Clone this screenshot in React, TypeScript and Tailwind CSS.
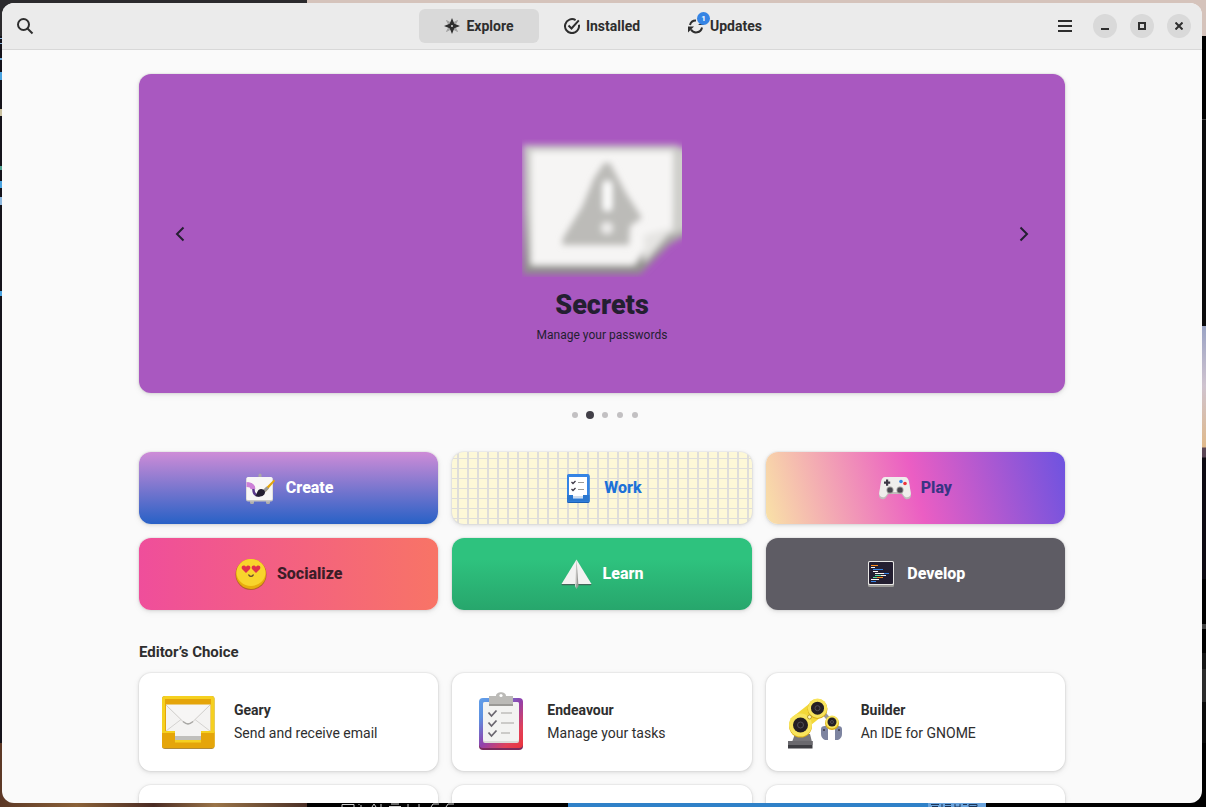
import { useState } from "react";
import type { ReactNode } from "react";

const cardShadow = "shadow-[0_0_0_1px_rgba(0,0,0,0.03),0_1px_3px_1px_rgba(0,0,0,0.07),0_2px_6px_2px_rgba(0,0,0,0.03)]";

function SearchIcon() {
  return (
    <svg width="18" height="18" viewBox="0 0 18 18" fill="none" stroke="#2e2e2e" strokeWidth="2" aria-hidden="true">
      <circle cx="7.5" cy="7.5" r="5.5" />
      <path d="M11.5 11.5 16.5 16.5" />
    </svg>
  );
}

function ExploreIcon() {
  return (
    <svg width="16" height="16" viewBox="0 0 16 16" aria-hidden="true">
      <path d="M2.5 2.5 7 5 5 7zM13.500 2.500 11 7 9 5zM2.500 13.500 5 9 7 11zM13.500 13.500 9 11 11 9z" fill="#a3a3a3" stroke="#a3a3a3" strokeWidth="1" />
      <path d="M8 0 10.300 5.700 16 8 10.300 10.300 8 16 5.700 10.300 0 8 5.700 5.700zM8 7a1 1 0 1 0 0 2 1 1 0 0 0 0-2z" fill="#2e2e2e" fillRule="evenodd" />
    </svg>
  );
}

function InstalledIcon() {
  return (
    <svg width="16" height="16" viewBox="0 0 16 16" fill="none" stroke="#2e2e2e" strokeWidth="2" aria-hidden="true">
      <path d="M11.600 2.100A7 7 0 1 0 14.900 6.800" />
      <path d="M4.500 7.500 7.500 10.500 14.800 2.300" />
    </svg>
  );
}

function UpdatesIcon() {
  return (
    <svg width="16" height="16" viewBox="0 0 16 16" fill="none" stroke="#2e2e2e" strokeWidth="2" aria-hidden="true">
      <path d="M2 7A6 6 0 0 1 8 2.500" />
      <path d="M14 9.500A6 6 0 0 1 3 11.500" />
      <path d="M0 8.500H6L0 14.500z" fill="#2e2e2e" stroke="none" />
      <path d="M10 7H16V2.500z" fill="#2e2e2e" stroke="none" />
    </svg>
  );
}

function MissingImage() {
  return (
    <svg className="h-[138px] w-[160px]" viewBox="0 0 160 138" aria-hidden="true">
      <defs>
        <filter id="soft" x="-10%" y="-10%" width="120%" height="120%">
          <feGaussianBlur stdDeviation="3" />
        </filter>
        <linearGradient id="sheet" x1="0" y1="0" x2="0" y2="1">
          <stop offset="0" stopColor="#c9c9c6" />
          <stop offset="0.5" stopColor="#bdbdb9" />
          <stop offset="1" stopColor="#8f8e8b" />
        </linearGradient>
      </defs>
      <g filter="url(#soft)">
        <path d="M1 6H154L170 13V93L148 105L118 135H1z" fill="url(#sheet)" />
        <path d="M9 12H151V93L130 101L112 126H9z" fill="#f6f5f4" />
        <path d="M152 14H168V88L152 95z" fill="#cfcfcb" />
        <path d="M122 96 152 88 122 124z" fill="#e6e5e3" />
      </g>
      <g filter="url(#soft)">
        <path d="M82 24H88L104 54L120 79L108 87L107 106H40L41 99L60 68L72 39z" fill="#bcbbb8" />
        <rect x="81" y="42" width="9" height="30" rx="4" fill="#fff" />
        <circle cx="85" cy="89" r="6" fill="#efeeed" />
      </g>
    </svg>
  );
}

function CreateIcon() {
  return (
    <svg width="32" height="32" viewBox="0 0 32 32" aria-hidden="true">
      <path d="M14.500 6V3a1.500 1.500 0 0 1 3 0v3z" fill="#a9a8a5" />
      <rect x="6" y="28" width="4" height="4" rx="1.500" fill="#b0afac" />
      <rect x="22" y="28" width="4" height="4" rx="1.500" fill="#b0afac" />
      <rect x="2" y="5.500" width="27" height="24" rx="2" fill="#c9c7c4" />
      <rect x="2.500" y="5" width="26" height="23" rx="1.500" fill="#f8f7f6" />
      <path d="M4 12C8 12 9.500 14 9.500 18c0 4 2 5.500 6 5.500" fill="none" stroke="#5b3a8c" strokeWidth="2.500" />
      <path d="M2.500 12.500c4 0 6 1 6.500 4.500" fill="none" stroke="#cd80d8" strokeWidth="5" />
      <path d="M19.500 18 30 7.500 31 9 21.500 20z" fill="#e5a50a" />
      <path d="M18.500 18.500 22.500 14.500 25 16.500 21 20.500z" fill="#9a9996" />
      <path d="M11 24c2-1 1.500-4 3.500-6 2.500-2 6-.5 6.500 2 .3 3.500-4.500 6-10 4z" fill="#241f31" />
    </svg>
  );
}

function WorkIcon() {
  return (
    <svg width="32" height="32" viewBox="0 0 32 32" aria-hidden="true">
      <rect x="5" y="3" width="22.500" height="28" rx="1.500" fill="#1a5fb4" />
      <rect x="5" y="2" width="22.500" height="28" rx="1.500" fill="#3584e4" />
      <path d="M7 5h18v18H7z" fill="#fff" />
      <path d="M5 23h6v4h10v-4h6.500v6.500H5z" fill="#2b77cf" />
      <path d="M11 23h10v3.500H11z" fill="#cfdcec" />
      <path d="M11 22h10v2H11z" fill="#fff" />
      <path d="m9.500 10 1.500 1.500L13.500 9M9.500 17l1.500 1.500 2.500-2.500" fill="none" stroke="#3d3846" strokeWidth="1.300" />
      <path d="M16 10.500h6M16 17.500h6" stroke="#9a9996" />
    </svg>
  );
}

function PlayIcon() {
  return (
    <svg width="32" height="32" viewBox="0 0 32 32" aria-hidden="true">
      <path d="M6.500 6h19c3 0 4 2 4.500 5l2 12c.5 4-5 6-7 2.500L22.500 22h-13L7 25.500C5 29-.5 27 0 23l2-12c.5-3 1.500-5 4.500-5z" fill="#c0bfbc" />
      <path d="M6.500 5h19c3 0 4 2 4.500 5l1.800 11c.5 4-5 6-7 2.500L22.500 20h-13L7.200 23.500c-2 3.500-7.500 1.500-7-2.500L2 10c.5-3 1.500-5 4.500-5z" fill="#efeeec" />
      <path d="M7 7.500h2.200v2h2v2.200h-2v2H7v-2H5V9.500h2z" fill="#3d3846" />
      <circle cx="22" cy="9.500" r="1.800" fill="#3584e4" />
      <circle cx="26" cy="11.500" r="1.800" fill="#ed333b" />
      <circle cx="11" cy="18" r="3.500" fill="#9a9996" />
      <circle cx="21" cy="18" r="3.500" fill="#9a9996" />
      <circle cx="11" cy="18" r="2.600" fill="#4a4750" />
      <circle cx="21" cy="18" r="2.600" fill="#4a4750" />
    </svg>
  );
}

function SocializeIcon() {
  return (
    <svg width="32" height="32" viewBox="0 0 32 32" aria-hidden="true">
      <circle cx="16" cy="16.500" r="15.500" fill="#b5622c" />
      <circle cx="16" cy="16" r="15" fill="#e8ad0c" />
      <ellipse cx="16" cy="14.500" rx="14.500" ry="13.500" fill="#f8d52c" />
      <path d="M11 15 7 11C5.500 8 9 6 11 8.800c2-2.800 5.500-.8 4 2.200zM21 15l-4-4C15.500 8 19 6 21 8.800c2-2.800 5.500-.8 4 2.200z" fill="#e0304a" />
      <path d="M13.500 16.500c.8 2.500 4.200 2.500 5 0" fill="none" stroke="#63452c" strokeWidth="1.200" />
    </svg>
  );
}

function LearnIcon() {
  return (
    <svg width="32" height="32" viewBox="0 0 32 32" aria-hidden="true">
      <path d="M.5 26 1 27.200H14V25zM30.500 26 30 27.200H17V25z" fill="#44675a" />
      <path d="M15.500 1.500 30.500 26H.5z" fill="#f3f2f1" />
      <path d="M15.500 1.500 14 28l1.500 3z" fill="#d6d4d1" />
      <path d="M15.500 1.500 17.500 28l-2 3z" fill="#9a9996" />
    </svg>
  );
}

function DevelopIcon() {
  return (
    <svg width="32" height="32" viewBox="0 0 32 32" aria-hidden="true">
      <rect x="3" y="4" width="26" height="25" rx="1.500" fill="#9a9996" />
      <rect x="3" y="3" width="26" height="24" rx="1.500" fill="#e8e7e5" />
      <rect x="4" y="4" width="24" height="22" rx="1" fill="#241f31" />
      <path d="M6 7.500h7M12 19.500h6" stroke="#ff8c1a" />
      <path d="M6 9.500h4M8 13.500h5M10 15.500h9M16 17.500h5M6 21.500h8" stroke="#f6f5f4" />
      <path d="M8 11.500h10M19 15.500h5M6 23.500h5" stroke="#3584e4" />
      <path d="M10 17.500h6M8 19.500h4" stroke="#57e3a0" />
    </svg>
  );
}

function GearyIcon() {
  return (
    <svg width="64" height="64" viewBox="0 0 64 64" aria-hidden="true">
      <rect x="6" y="6" width="52.500" height="53" rx="3" fill="#b08a3a" />
      <rect x="6" y="6" width="52.500" height="52" rx="3" fill="#f5d020" />
      <rect x="9" y="9" width="46" height="34" fill="#e5a50a" />
      <path d="M10 14.500h44.500V42H10z" fill="#f4f3f2" />
      <path d="m10 41 15-11.500M54 41 39 29.500" stroke="#d5d3d1" fill="none" />
      <path d="M10 15 27 31.500c4 3 6 3 10 0L54 15" fill="#f7f6f5" stroke="#d0cecb" />
      <path d="M27 31.500c4 3.200 6 3.200 10 0" fill="none" stroke="#a9a8a5" strokeWidth="1.500" />
      <path d="M6 42h13v10h26V42h13.500v14a2 2 0 0 1-2 2H8a2 2 0 0 1-2-2z" fill="#e5a50a" />
      <path d="M6 41h13v2H6zM45 41h13.500v2H45z" fill="#f5d020" />
      <path d="M19 42h26v5H19z" fill="#f4f3f2" />
      <path d="M19 46h26v4H19z" fill="#c0bfbc" />
      <path d="M19 50h26v2.500H19z" fill="#f5d020" />
    </svg>
  );
}

function EndeavourIcon() {
  return (
    <svg width="64" height="64" viewBox="0 0 64 64" aria-hidden="true">
      <defs>
        <linearGradient id="board" x1="0" y1="0" x2="1" y2="1">
          <stop offset="0" stopColor="#62a0ea" />
          <stop offset="0.220" stopColor="#5c8fe0" />
          <stop offset="0.500" stopColor="#9141ac" />
          <stop offset="0.780" stopColor="#e0405a" />
          <stop offset="1" stopColor="#ed333b" />
        </linearGradient>
      </defs>
      <rect x="10" y="10" width="44" height="50" rx="4" fill="#7a2a5c" />
      <rect x="10" y="8" width="44" height="50" rx="4" fill="url(#board)" />
      <rect x="14" y="12" width="36" height="41" rx="2" fill="#dcdad7" />
      <rect x="14" y="12" width="36" height="39" rx="2" fill="#f3f3f2" />
      <path d="M20 6h7c0-5 10-5 10 0h7v9H20z" fill="#bbbab7" />
      <path d="M20 14h24v2H20z" fill="#9a9996" />
      <circle cx="32" cy="5.500" r="1.600" fill="#fff" />
      <path d="m19.500 22.500 3 3.500 5-5.500M19.500 32.500l3 3.500 5-5.500M19.500 42.500l3 3.500 5-5.500" fill="none" stroke="#6b6770" strokeWidth="1.800" />
      <path d="M32 23h11M32 33h13M32 43h9" stroke="#c0bfbc" strokeWidth="1.500" />
    </svg>
  );
}

function BuilderIcon() {
  return (
    <svg width="64" height="64" viewBox="0 0 64 64" aria-hidden="true">
      <path d="M12 44h15l2 8H9z" fill="#77767b" />
      <rect x="5" y="51" width="24.500" height="7.500" fill="#3d3d42" />
      <rect x="5" y="51" width="24.500" height="4" fill="#6a696e" />
      <path d="m38 20 11 13" stroke="#9a9996" strokeWidth="4" />
      <path d="M38 39q0-3 4-3h2l1 3v11h-3q-4-2-4-6zM59 39q0-3-4-3h-2l-1 3v11h3q4-2 4-6z" fill="#7d84a0" />
      <path d="M43 38h10v-4H43z" fill="#8d93aa" />
      <circle cx="41" cy="40" r="1" fill="#3d3846" />
      <circle cx="56" cy="40" r="1" fill="#3d3846" />
      <path d="M7 29 26 14l12 13-10 8z" fill="#f3d838" />
      <circle cx="17.500" cy="36" r="11.500" fill="#d9ac16" />
      <circle cx="17.500" cy="35" r="11.500" fill="#f8e45c" />
      <circle cx="34.500" cy="19" r="10" fill="#d9ac16" />
      <circle cx="34.500" cy="18.200" r="9.700" fill="#f8e45c" />
      <circle cx="49" cy="33" r="7" fill="#d9ac16" />
      <circle cx="49" cy="32" r="6.500" fill="#f8e45c" />
      <circle cx="26.500" cy="27" r="2" fill="#fff7c0" stroke="#b89c2a" />
      <circle cx="17.500" cy="35" r="7.500" fill="#241f24" />
      <circle cx="34.500" cy="18.200" r="6.500" fill="#241f24" />
      <circle cx="49" cy="32" r="4.500" fill="#241f24" />
      <g fill="none" stroke="#504d55">
        <circle cx="17.500" cy="35" r="3" />
        <circle cx="34.500" cy="18.200" r="2.500" />
        <circle cx="49" cy="32" r="1.500" />
      </g>
    </svg>
  );
}

const tabs: { label: string; icon: ReactNode; badge?: number }[] = [
  { label: "Explore", icon: <ExploreIcon /> },
  { label: "Installed", icon: <InstalledIcon /> },
  { label: "Updates", icon: <UpdatesIcon />, badge: 1 },
];

const categories = [
  { label: "Create", icon: <CreateIcon />, style: "text-white bg-[linear-gradient(180deg,#ce8cd7_0%,#2861c6_100%)]" },
  {
    label: "Work",
    icon: <WorkIcon />,
    style:
      "text-[#1c71d8] bg-[#fdf8d7] bg-[linear-gradient(#deddda_1px,transparent_1px),linear-gradient(90deg,#deddda_2px,transparent_2px)] bg-[size:10px_10px] bg-[position:5px_6px]",
  },
  { label: "Play", icon: <PlayIcon />, style: "text-[#393484] bg-[linear-gradient(75deg,#f9e2a7_0%,#eb5ec3_50%,#6d53e0_100%)]" },
  { label: "Socialize", icon: <SocializeIcon />, style: "text-[#3d1d28] bg-[linear-gradient(90deg,#ef4e9b_0%,#f87466_100%)]" },
  { label: "Learn", icon: <LearnIcon />, style: "text-white bg-[linear-gradient(180deg,#2ec27e_30%,#27a66c_100%)]" },
  { label: "Develop", icon: <DevelopIcon />, style: "text-white bg-[#5e5c64]" },
];

const editorsChoice = [
  { name: "Geary", summary: "Send and receive email", icon: <GearyIcon /> },
  { name: "Endeavour", summary: "Manage your tasks", icon: <EndeavourIcon /> },
  { name: "Builder", summary: "An IDE for GNOME", icon: <BuilderIcon /> },
];

// Slivers of the desktop that stay visible around the window
function Desktop() {
  return (
    <div className="absolute inset-0 flex flex-col justify-between bg-black" aria-hidden="true">
      <div className="flex h-9">
        <div className="w-[307px] bg-[#2b2a2d]" />
        <div className="flex-1 bg-[#d5c3bb]" />
      </div>
      <div className="flex flex-1 justify-between">
        <div className="w-4 bg-[linear-gradient(180deg,#15131b_0_2px,#8db7dd_2px_3px,#15131b_3px_7px,#8db7dd_7px_8px,#15131b_8px_22px,#6fa9d8_22px_24px,#15131b_24px_36px,#4aa3e0_36px_44px,#15131b_44px_73px,#c9c1a0_73px_80px,#15131b_80px_130px,#4f9f8f_130px_134px,#15131b_134px_145px,#4aa3e0_145px_152px,#15131b_152px_161px,#8db7dd_161px_169px,#15131b_169px_255px,#4aa3e0_255px_260px,#15131b_260px)]" />
        <div className="w-4 bg-[linear-gradient(180deg,#000_0_83px,#444_83px_84px,#0b0b0c_84px_290px,#9aa3c4_290px,#cfc3cf_350px,#e0b98a_411px,#5b4655_412px_421px,#0d0a12_422px_543px,#000_543px_588px,#444_588px_593px,#000_593px_617px,#151515_617px_633px,#2b2b2b_633px_666px,#0b0b0b_666px)]" />
      </div>
      <div className="flex h-16 items-end bg-black">
        <div className="h-16 w-[307px] bg-[linear-gradient(90deg,#5c3826,#8a6138_25%,#4a2b24_50%,#9a7448_70%,#4a2f26)]" />
        <svg className="h-1 w-[261px]" viewBox="0 0 261 4" fill="none" stroke="#cfcfcf">
          <path d="M35 4V1.500h12V4M52 1v1M54 4V2M65 4l2-3 2 3M74 1v3M84 1h8M82 3.500h12M101 1v3M112 1v3M124 4l2-3h6M139 4l2-3h6" />
        </svg>
        <div className="h-1 w-[360px] bg-[#2f81c8]" />
        <svg className="h-1 w-[58px] bg-[#6aa3dc]" viewBox="0 0 58 4" fill="none" stroke="#1c3558">
          <path d="M3 1.500h8M4 3.500h6M14 1v3M17 1.500h6M17 3.500h6M27 1v3h5V1M35 1.500h4M41 1.500h8v2h-8z" />
        </svg>
      </div>
    </div>
  );
}

function HeaderBar() {
  const [activeTab, setActiveTab] = useState("Explore");

  return (
    <header className="grid grid-cols-[1fr_auto_1fr] items-center border-b border-[#d8d8d8] bg-[#ebebeb] py-1.5">
      <button aria-label="Search" className="ml-1.5 flex size-[34px] items-center justify-center rounded-md">
        <SearchIcon />
      </button>
      <nav className="flex gap-[3px]">
        {tabs.map((tab) => (
          <button
            key={tab.label}
            onClick={() => setActiveTab(tab.label)}
            className={`flex h-[34px] w-[120px] items-center justify-center gap-1.5 rounded-md text-[14px] font-bold ${activeTab === tab.label ? "bg-[#d9d9d9]" : ""}`}
          >
            <span className="relative">
              {tab.icon}
              {tab.badge && (
                <span className="absolute -top-1.5 left-[9px] flex size-[13px] items-center justify-center rounded-full bg-[#3584e4] text-[8px] text-white">{tab.badge}</span>
              )}
            </span>
            {tab.label}
          </button>
        ))}
      </nav>
      <div className="mr-[11px] flex items-center justify-end gap-[13px]">
        <button aria-label="Main menu" className="flex size-[34px] items-center justify-center rounded-md">
          <svg width="14" height="12" viewBox="0 0 14 12" stroke="#2e2e2e" strokeWidth="2" aria-hidden="true">
            <path d="M0 1h14M0 6h14M0 11h14" />
          </svg>
        </button>
        <button aria-label="Minimize" className="-ml-0.5 flex size-6 items-center justify-center rounded-full bg-[#d9d9d9]">
          <svg width="8" height="8" viewBox="0 0 8 8" stroke="#2e2e2e" strokeWidth="2" aria-hidden="true">
            <path d="M0 7h8" />
          </svg>
        </button>
        <button aria-label="Maximize" className="flex size-6 items-center justify-center rounded-full bg-[#d9d9d9]">
          <svg width="8" height="8" viewBox="0 0 8 8" fill="none" stroke="#2e2e2e" strokeWidth="2" aria-hidden="true">
            <path d="M1 1h6v6H1z" />
          </svg>
        </button>
        <button aria-label="Close" className="flex size-6 items-center justify-center rounded-full bg-[#d9d9d9]">
          <svg width="8" height="8" viewBox="0 0 8 8" stroke="#2e2e2e" strokeWidth="2" aria-hidden="true">
            <path d="M.5.5l7 7M7.500.5l-7 7" />
          </svg>
        </button>
      </div>
    </header>
  );
}

function FeaturedBanner() {
  return (
    <section className={`flex min-h-[319px] items-center justify-between rounded-xl bg-[#a958c0] px-6 text-[#241f31] ${cardShadow}`}>
      <button aria-label="Previous" className="flex size-[34px] items-center justify-center">
        <svg width="10" height="16" viewBox="0 0 10 16" fill="none" stroke="#241f31" strokeWidth="2" aria-hidden="true">
          <path d="M8.500 1.500 2 8l6.500 6.500" />
        </svg>
      </button>
      <div className="flex flex-col items-center pt-4">
        <MissingImage />
        <h1 className="mt-3 text-[27px] leading-8 font-black">Secrets</h1>
        <p className="mt-1 text-[12px] leading-5">Manage your passwords</p>
      </div>
      <button aria-label="Next" className="flex size-[34px] items-center justify-center">
        <svg width="10" height="16" viewBox="0 0 10 16" fill="none" stroke="#241f31" strokeWidth="2" aria-hidden="true">
          <path d="M1.500 1.500 8 8l-6.500 6.500" />
        </svg>
      </button>
    </section>
  );
}

export default function App() {
  return (
    <div className="relative h-screen overflow-hidden pt-[3px] pr-1 pb-1 pl-0.5 font-[Roboto,sans-serif] text-[#2e2e2e]">
      <Desktop />
      <div className="relative flex h-full flex-col overflow-hidden rounded-xl bg-[#fafafa]">
        <HeaderBar />
        <main className="min-h-0 flex-1 overflow-hidden px-6 pt-6">
          <div className="mx-auto max-w-[926px]">
            <FeaturedBanner />
            <div className="mt-[18px] flex h-2 items-center justify-center gap-[9px] pl-1.5">
              {[0, 1, 2, 3, 4].map((page) => (
                <span key={page} className={page === 1 ? "-mx-px size-2 rounded-full bg-[#424048]" : "size-1.5 rounded-full bg-[#c2c0c2]"} />
              ))}
            </div>
            <section className="mt-[33px] grid grid-cols-3 gap-[14px]">
              {categories.map((category) => (
                <button key={category.label} className={`flex h-[72px] items-center justify-center gap-2.5 rounded-xl text-base font-extrabold ${category.style} ${cardShadow}`}>
                  {category.icon}
                  {category.label}
                </button>
              ))}
            </section>
            <h2 className="mt-8 text-[15px] leading-5 font-bold">Editor’s Choice</h2>
            <section className="mt-[11px] grid grid-cols-3 gap-[14px]">
              {editorsChoice.map((app) => (
                <button key={app.name} className={`flex items-center gap-[14px] rounded-xl border border-white bg-white p-4 text-left ${cardShadow}`}>
                  {app.icon}
                  <span className="flex flex-col text-[14px] leading-[23px]">
                    <span className="font-bold">{app.name}</span>
                    <span>{app.summary}</span>
                  </span>
                </button>
              ))}
              {[0, 1, 2].map((slot) => (
                <div key={slot} className={`h-[98px] rounded-xl bg-white ${cardShadow}`} />
              ))}
            </section>
          </div>
        </main>
      </div>
    </div>
  );
}
